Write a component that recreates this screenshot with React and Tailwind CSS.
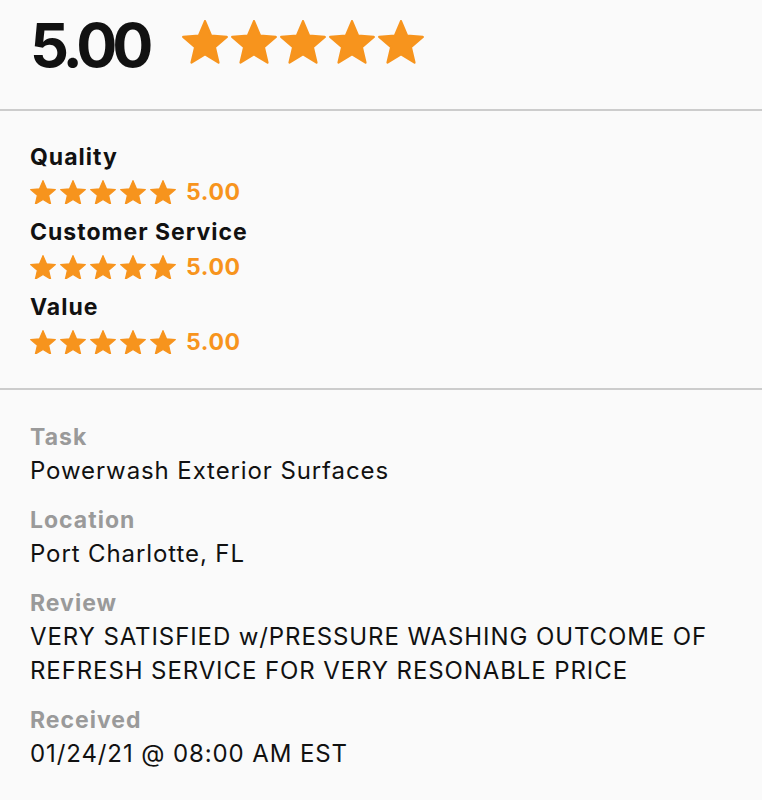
import React from 'react';

const ORANGE = '#f7941d';

function Star({ size }) {
  return (
    <svg width={size} height={size * 0.94} viewBox="1.5 1.5 21 19.8" className="block">
      <path
        d="M12 17.27L18.18 21l-1.64-7.03L22 9.24l-7.19-.61L12 2 9.19 8.63 2 9.24l5.46 4.73L5.82 21z"
        fill={ORANGE}
        stroke={ORANGE}
        strokeWidth="1"
        strokeLinejoin="round"
      />
    </svg>
  );
}

function Stars({ size, gap }) {
  return (
    <div className={`flex ${gap}`}>
      {[0, 1, 2, 3, 4].map((i) => (
        <Star key={i} size={size} />
      ))}
    </div>
  );
}

const SUB = ['Quality', 'Customer Service', 'Value'];

const DETAILS = [
  { label: 'Task', value: ['Powerwash Exterior Surfaces'] },
  { label: 'Location', value: ['Port Charlotte, FL'] },
  {
    label: 'Review',
    value: ['VERY SATISFIED w/PRESSURE WASHING OUTCOME OF', 'REFRESH SERVICE FOR VERY RESONABLE PRICE'],
  },
  { label: 'Received', value: ['01/24/21 @ 08:00 AM EST'] },
];

export default function App() {
  return (
    <div className="w-[762px] h-[800px] bg-[#fafafa] text-[#111]" style={{ fontFamily: 'Inter, "Liberation Sans", sans-serif' }}>
      {/* Overall */}
      <div className="px-[30px] pt-[14px] pb-[33px] border-b-2 border-[#cccccc]">
        <div className="flex items-center h-[62px]">
          <span className="text-[61px] leading-none font-bold tracking-[-5px]">5.00</span>
          <div className="mb-[6px] ml-[34px]">
            <Stars size={46} gap="gap-[3px]" />
          </div>
        </div>
      </div>

      {/* Sub ratings */}
      <div className="px-[30px] pt-[31px] pb-[21px] border-b-2 border-[#cccccc]">
        {SUB.map((s) => (
          <div key={s} className="pb-[12px]">
            <div className="text-[23px] leading-[30px] font-bold tracking-[1px]">{s}</div>
            <div className="flex items-center h-[26px] mt-[7px] gap-[10px]">
              <Stars size={26} gap="gap-[4px]" />
              <span className="text-[23px] font-bold leading-none tracking-[0.6px]" style={{ color: ORANGE }}>5.00</span>
            </div>
          </div>
        ))}
      </div>

      {/* Details */}
      <div className="px-[30px] pt-[30px] flex flex-col gap-[15px]">
        {DETAILS.map((d) => (
          <div key={d.label}>
            <div className="text-[23px] leading-[34px] font-bold tracking-[1px] text-[#9a9a9a]">{d.label}</div>
            {d.value.map((v) => (
              <div key={v} className="text-[24px] leading-[34px] tracking-[0.9px]">{v}</div>
            ))}
          </div>
        ))}
      </div>
    </div>
  );
}
